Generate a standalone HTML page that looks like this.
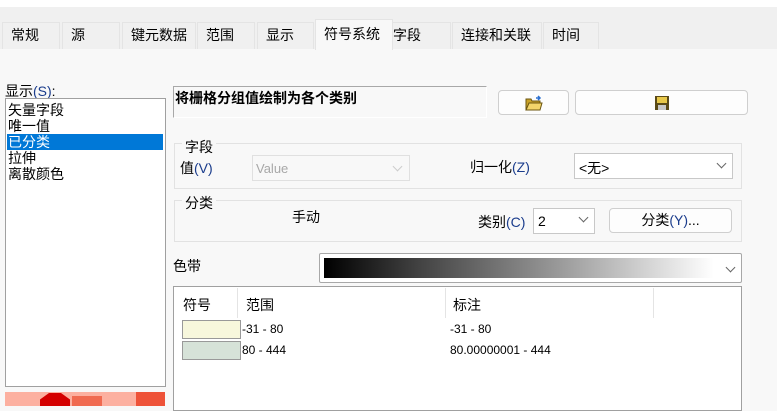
<!DOCTYPE html>
<html><head><meta charset="utf-8"><style>
*{margin:0;padding:0;box-sizing:border-box}
body{width:777px;height:406px;overflow:hidden;background:#f8f8f8;font-family:"Liberation Sans","Noto Sans CJK SC",sans-serif;font-size:13px;color:#000;position:relative}
.a{position:absolute;white-space:nowrap}
.tab{position:absolute;top:22px;height:27px;background:#f0f0f0;border:1px solid #e4e4e4;border-bottom:none;line-height:25px;padding-left:8px;font-size:14px}
.box{position:absolute;background:#fff;border:1px solid #b8b8b8}
.btn{position:absolute;background:#fdfdfd;border:1px solid #cfcfcf;border-radius:4px;text-align:center}
.grp{position:absolute;border:1px solid #e2e2e2}
.chev{position:absolute;width:7px;height:7px;border-right:1px solid #666;border-bottom:1px solid #666;transform:rotate(45deg)}
</style></head><body>
<div class="a" style="left:0;top:0;width:777px;height:7px;background:#fff"></div>
<div class="a" style="left:0;top:7px;width:777px;height:42px;background:#f0f0f0"></div>
<div class="tab" style="left:2px;width:58px">常规</div>
<div class="tab" style="left:62px;width:58px">源</div>
<div class="tab" style="left:122px;width:74px">键元数据</div>
<div class="tab" style="left:197px;width:58px">范围</div>
<div class="tab" style="left:257px;width:57px">显示</div>
<div class="tab" style="left:315px;top:19px;height:31px;width:78px;background:#f8f8f8;line-height:28px">符号系统</div>
<div class="tab" style="left:393px;width:58px;border-left:none;padding-left:0">字段</div>
<div class="tab" style="left:452px;width:90px">连接和关联</div>
<div class="tab" style="left:543px;width:56px">时间</div>

<div class="a" style="left:5px;top:81px;font-size:14px">显示<span style="color:#1a3c8c">(S)</span>:</div>
<div class="box" style="left:5px;top:98px;width:161px;height:289px;border-color:#a0a0a0"></div>
<div class="a" style="left:8px;top:102px;font-size:14px;line-height:16px">矢量字段<br>唯一值</div>
<div class="a" style="left:7px;top:134px;width:156px;height:16px;background:#0078d7;color:#fff;font-size:14px;line-height:16px;padding-left:1px">已分类</div>
<div class="a" style="left:8px;top:150px;font-size:14px;line-height:16px">拉伸<br>离散颜色</div>
<div class="a" style="left:5px;top:392px;width:160px;height:14px;background:#fcb0a0"></div>
<div class="a" style="left:40px;top:393px;width:30px;height:13px;background:#d40000;clip-path:polygon(30% 0,70% 0,100% 50%,100% 100%,0 100%,0 50%)"></div>
<div class="a" style="left:72px;top:396px;width:30px;height:10px;background:#f06a50"></div>
<div class="a" style="left:136px;top:392px;width:29px;height:14px;background:#ee5238"></div>

<div class="a" style="left:173px;top:86px;width:314px;height:32px;border-top:1px solid #a8a8a8;border-left:1px solid #a8a8a8;border-right:1px solid #fff;border-bottom:1px solid #fff"></div>
<div class="a" style="left:175px;top:88px;font-size:14px;font-weight:bold">将栅格分组值绘制为各个类别</div>
<div class="btn" style="left:498px;top:90px;width:71px;height:25px">
<svg width="20" height="18" viewBox="0 0 20 18" style="margin-top:3px"><path d="M2 5h5l1 2h8v9H2z" fill="#c9a227" stroke="#6b5510"/><path d="M2 16l3-7h13l-2 7z" fill="#f3d56a" stroke="#6b5510"/><path d="M12 4h4M14 2l2 2-2 2" stroke="#2a6fd0" fill="none" stroke-width="1.5"/></svg></div>
<div class="btn" style="left:575px;top:90px;width:173px;height:25px">
<svg width="16" height="16" viewBox="0 0 16 16" style="margin-top:4px"><rect x="1" y="1" width="14" height="14" fill="#5a4a18"/><rect x="3" y="2" width="10" height="6" fill="#e8c84a"/><rect x="4" y="10" width="8" height="5" fill="#c8c8c8"/></svg></div>

<div class="grp" style="left:174px;top:143px;width:568px;height:46px"></div>
<div class="a" style="left:182px;top:137px;background:#f8f8f8;padding:0 3px;font-size:14px">字段</div>
<div class="a" style="left:180px;top:158px;font-size:14px">值<span style="color:#1a3c8c">(V)</span></div>
<div class="a" style="left:252px;top:155px;width:158px;height:26px;border:1px solid #e0e0e0;background:#f8f8f8;color:#a8a8a8;padding:5px 0 0 3px">Value</div>
<div class="chev" style="left:394px;top:163px;border-color:#ccc"></div>
<div class="a" style="left:470px;top:157px;font-size:14px">归一化<span style="color:#1a3c8c">(Z)</span></div>
<div class="box" style="left:574px;top:153px;width:159px;height:26px;border-color:#c8c8c8;padding:4px 0 0 4px;font-size:14px">&lt;无&gt;</div>
<div class="chev" style="left:718px;top:160px"></div>

<div class="grp" style="left:174px;top:200px;width:568px;height:42px"></div>
<div class="a" style="left:182px;top:193px;background:#f8f8f8;padding:0 3px;font-size:14px">分类</div>
<div class="a" style="left:292px;top:207px;font-size:14px">手动</div>
<div class="a" style="left:478px;top:212px;font-size:14px">类别<span style="color:#1a3c8c">(C)</span></div>
<div class="box" style="left:533px;top:208px;width:62px;height:26px;border-color:#c8c8c8;padding:4px 0 0 4px;font-size:14px">2</div>
<div class="chev" style="left:580px;top:214px"></div>
<div class="btn" style="left:609px;top:208px;width:123px;height:25px;line-height:23px;font-size:14px">分类<span style="color:#1a3c8c">(Y)</span>...</div>

<div class="a" style="left:173px;top:256px;font-size:14px">色带</div>
<div class="box" style="left:319px;top:253px;width:423px;height:30px;border-color:#a8a8a8;border-radius:2px"></div>
<div class="a" style="left:324px;top:258px;width:390px;height:20px;background:linear-gradient(to right,#000,#444 25%,#999 60%,#fff)"></div>
<div class="chev" style="left:727px;top:264px"></div>

<div class="box" style="left:173px;top:286px;width:569px;height:125px;border-color:#a0a0a0"></div>
<div class="a" style="left:237px;top:288px;width:1px;height:30px;background:#e4e4e4"></div>
<div class="a" style="left:445px;top:288px;width:1px;height:30px;background:#e4e4e4"></div>
<div class="a" style="left:653px;top:288px;width:1px;height:30px;background:#e4e4e4"></div>
<div class="a" style="left:183px;top:295px;font-size:14px">符号</div>
<div class="a" style="left:246px;top:295px;font-size:14px">范围</div>
<div class="a" style="left:453px;top:295px;font-size:14px">标注</div>
<div class="a" style="left:182px;top:320px;width:59px;height:19px;background:#f7f7dc;border:1px solid #999"></div>
<div class="a" style="left:182px;top:341px;width:59px;height:19px;background:#d6e2d8;border:1px solid #999"></div>
<div class="a" style="left:242px;top:322px;font-size:12px">-31 - 80</div>
<div class="a" style="left:242px;top:343px;font-size:12px">80 - 444</div>
<div class="a" style="left:450px;top:322px;font-size:12px">-31 - 80</div>
<div class="a" style="left:450px;top:343px;font-size:12px">80.00000001 - 444</div>
</body></html>
